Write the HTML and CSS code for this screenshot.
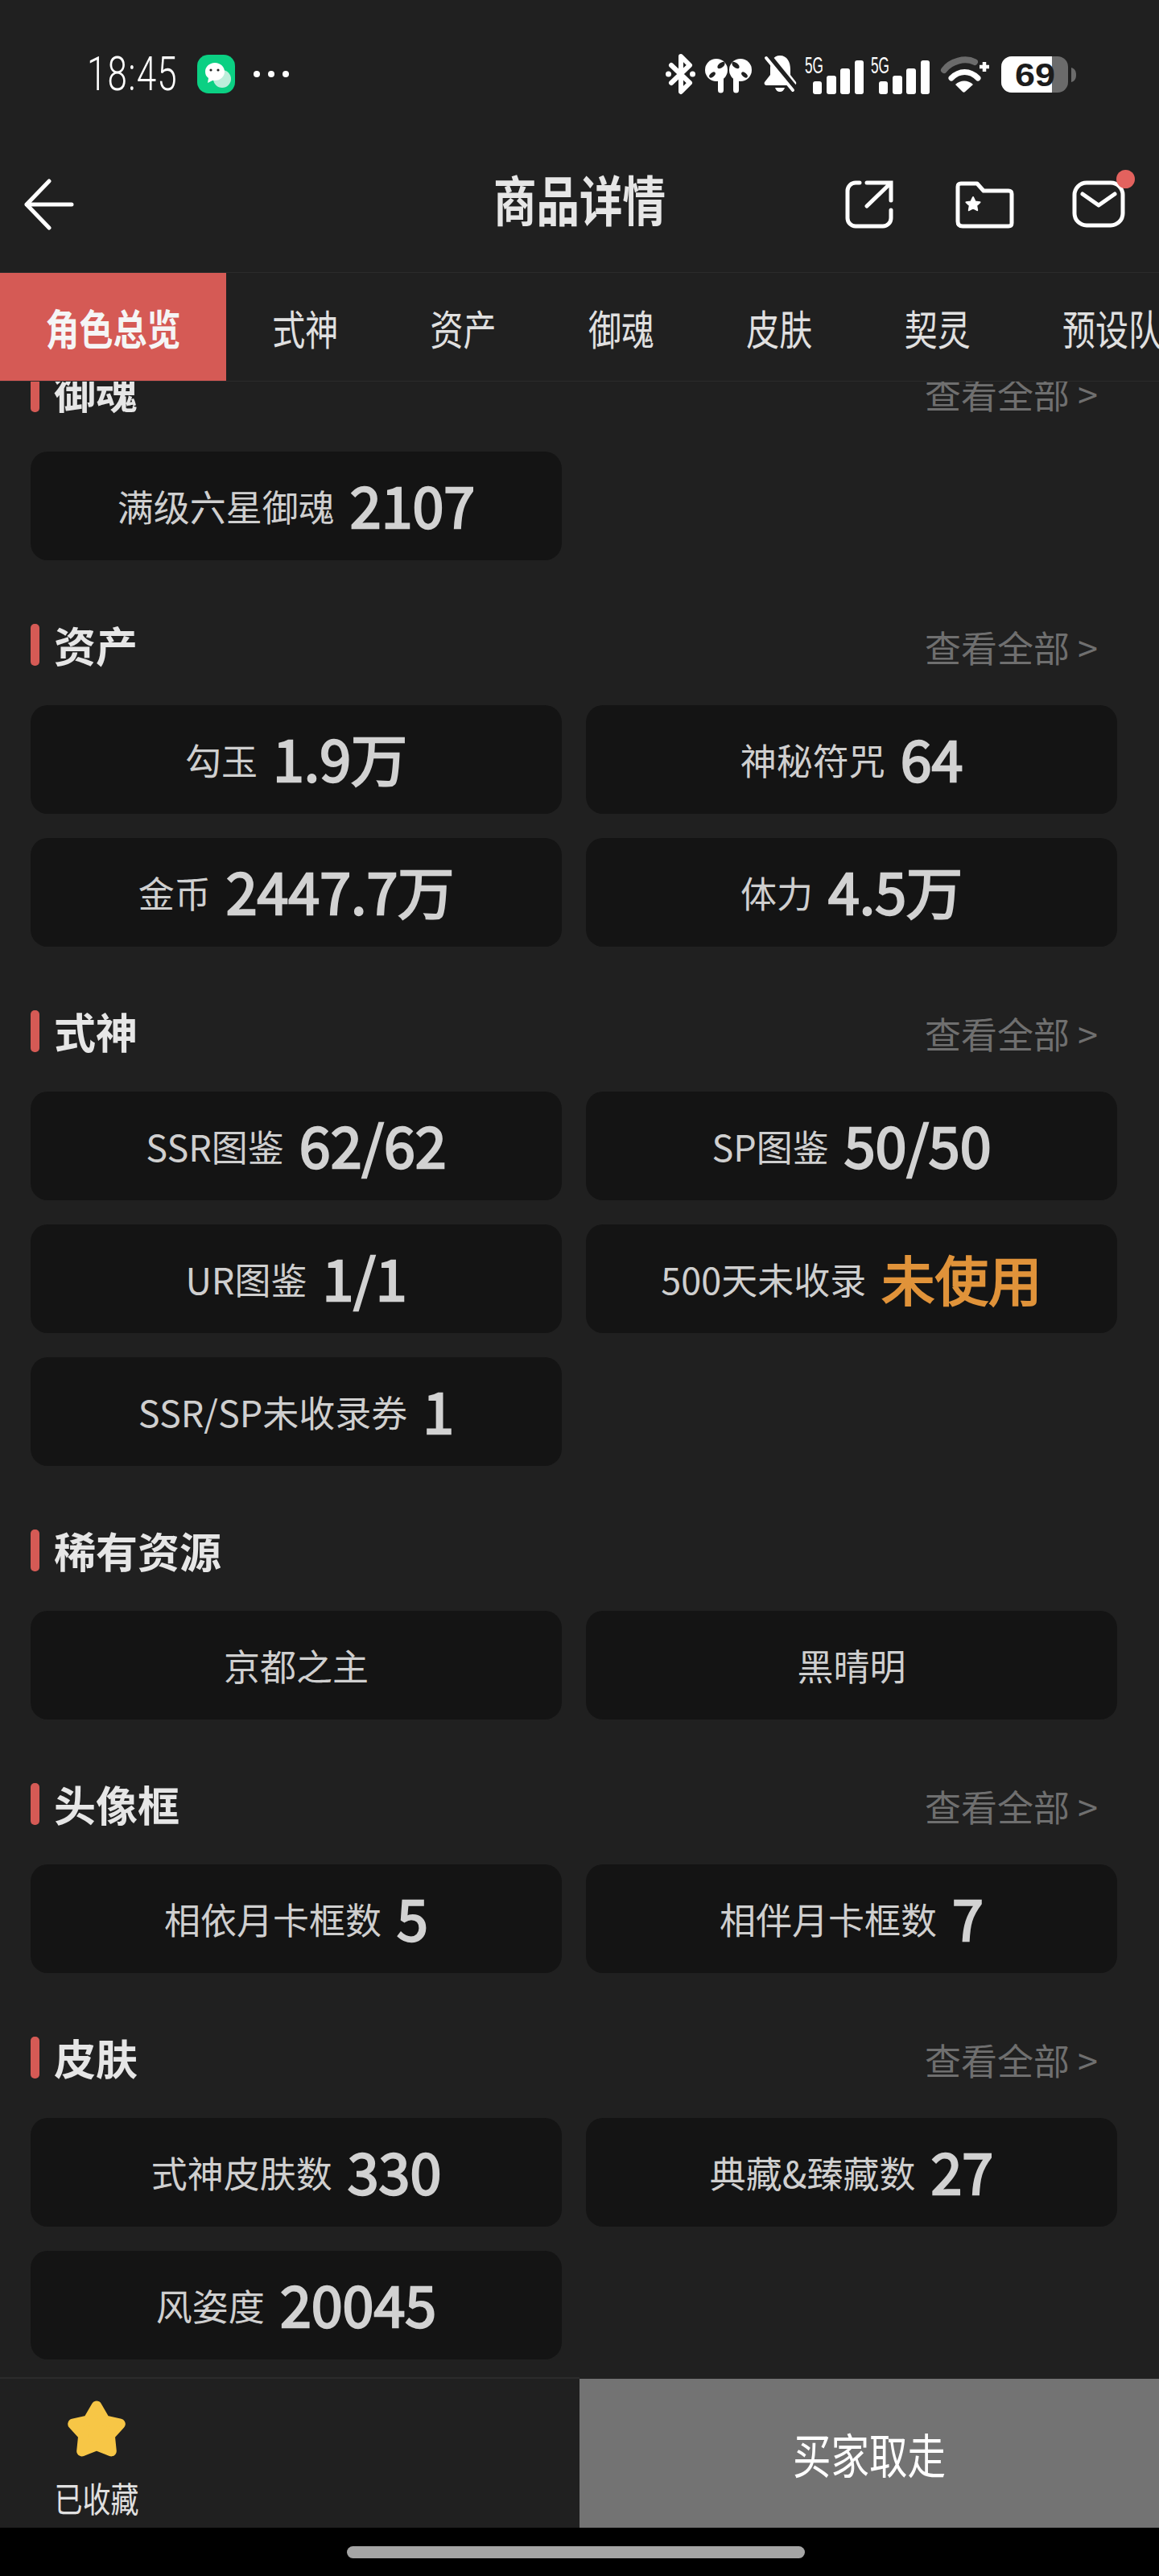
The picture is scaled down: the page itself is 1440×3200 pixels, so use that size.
FILE: index.html
```html
<!DOCTYPE html>
<html>
<head>
    <title>商品详情</title>
    <meta charset="UTF-8">
    <link rel="stylesheet" href="styles.css">
</head>
<body>
    <!-- 状态栏 -->
    <div class="status-bar">
        <span class="time">18:45</span>
        <svg class="wechat" viewBox="0 0 47 48" width="47" height="48">
            <rect width="47" height="48" rx="14" fill="#0bd083"/>
            <circle cx="31" cy="30" r="11" fill="#bdeedb"/>
            <path d="M22 10c7 0 12 5 12 11s-5 11-12 11l-3 0-6 3 1-6c-3-2-4-5-4-8 0-6 5-11 12-11z" fill="#fff"/>
            <circle cx="17" cy="19" r="1.6" fill="#222"/>
            <circle cx="26" cy="19" r="1.6" fill="#222"/>
        </svg>
        <span class="dots"><i></i><i></i><i></i></span>
        <div class="status-icons">
            <svg class="ic-bt" viewBox="0 0 37 52" width="37" height="52">
                <path d="M7 15l23 22-11 11V4l11 11L7 37" fill="none" stroke="#fff" stroke-width="6" stroke-linejoin="round" stroke-linecap="round"/>
                <circle cx="3.500" cy="26" r="3.500" fill="#fff"/>
                <circle cx="33.500" cy="26" r="3.500" fill="#fff"/>
            </svg>
            <svg class="ic-pods" viewBox="0 0 58 52" width="58" height="52">
                <circle cx="14" cy="21" r="14" fill="#fff"/>
                <circle cx="44" cy="21" r="14" fill="#fff"/>
                <path d="M19.500 30v16M38.500 30v16" stroke="#fff" stroke-width="7" stroke-linecap="round"/>
                <ellipse cx="20" cy="15" rx="5.500" ry="3" transform="rotate(-40 20 15)" fill="#202020"/>
                <ellipse cx="9" cy="27" rx="4.500" ry="2.500" transform="rotate(-40 9 27)" fill="#202020"/>
                <ellipse cx="38" cy="15" rx="5.500" ry="3" transform="rotate(40 38 15)" fill="#202020"/>
                <ellipse cx="49" cy="27" rx="4.500" ry="2.500" transform="rotate(40 49 27)" fill="#202020"/>
            </svg>
            <svg class="ic-bell" viewBox="0 0 42 52" width="42" height="52">
                <path d="M21 3c9 0 13 8 13 17v7l7 9c1 3-1 4-4 4H5c-3 0-4-2-3-4l7-9v-9C9 10 13 3 21 3z" fill="#fff"/>
                <path d="M15 43h12c-1 3-3 5-6 5s-5-2-6-5z" fill="#fff"/>
                <path d="M3 3l35 43" stroke="#202020" stroke-width="7" transform="translate(2 -2)"/>
                <path d="M4 6l33 40" stroke="#fff" stroke-width="4" stroke-linecap="round"/>
            </svg>
            <svg class="ic-signal" viewBox="0 0 73 52" width="73" height="52">
                <text class="net-type" x="0" y="25" textLength="23" lengthAdjust="spacingAndGlyphs">5G</text>
                <rect x="10" y="35" width="11" height="16" rx="3" fill="#fff"/>
                <rect x="27" y="28" width="12" height="23" rx="3" fill="#fff"/>
                <rect x="44" y="19" width="12" height="32" rx="3" fill="#fff"/>
                <rect x="62" y="9" width="11" height="42" rx="3" fill="#fff"/>
            </svg>
            <svg class="ic-signal ic-signal2" viewBox="0 0 73 52" width="73" height="52">
                <text class="net-type" x="0" y="25" textLength="23" lengthAdjust="spacingAndGlyphs">5G</text>
                <rect x="10" y="35" width="11" height="16" rx="3" fill="#fff"/>
                <rect x="27" y="28" width="12" height="23" rx="3" fill="#fff"/>
                <rect x="44" y="19" width="12" height="32" rx="3" fill="#fff"/>
                <rect x="62" y="9" width="11" height="42" rx="3" fill="#fff"/>
            </svg>
            <svg class="ic-wifi" viewBox="0 0 62 52" width="62" height="52">
                <path d="M4 21C12 10 30 5 42 11" fill="none" stroke="#6b6b6b" stroke-width="8" stroke-linecap="round"/>
                <path d="M13 31c10-10 23-10 33 0" fill="none" stroke="#fff" stroke-width="7" stroke-linecap="round"/>
                <path d="M18 39c6-6 16-6 22 0L30 48c-1 1-2 1-3 0z" fill="#fff"/>
                <path d="M54 11v12M48 17h12" stroke="#fff" stroke-width="4.500"/>
            </svg>
            <svg class="ic-battery" viewBox="0 0 93 52" width="93" height="52">
                <rect x="0" y="4" width="83" height="45" rx="13" fill="#6b6b6b"/>
                <path d="M13 4H63V49H13A13 13 0 0 1 0 36V17A13 13 0 0 1 13 4z" fill="#fff"/>
                <path d="M87 18c4 1 6 4 6 9s-2 8-6 9z" fill="#6b6b6b"/>
                <text class="battery-num" x="17" y="41" textLength="50" lengthAdjust="spacingAndGlyphs">69</text>
            </svg>
        </div>
    </div>

    <!-- 导航 -->
    <div class="nav-bar">
        <div class="nav-left">
            <svg viewBox="0 0 60 64" width="60" height="64">
                <path d="M31 3L3 32l28 29M3 32h56" fill="none" stroke="#fff" stroke-width="5" stroke-linecap="round" stroke-linejoin="round"/>
            </svg>
        </div>
        <h1 class="nav-title"><span>商品详情</span></h1>
        <div class="nav-right">
            <svg viewBox="0 0 60 60" width="60" height="60">
                <path d="M18 3h-5A10 10 0 0 0 3 13v34a10 10 0 0 0 10 10h34a10 10 0 0 0 10-10V37M27 3h30v22M27 32L56 4" fill="none" stroke="#fff" stroke-width="5" stroke-linecap="round"/>
            </svg>
            <svg class="ic-folder" viewBox="0 0 73 60" width="73" height="60">
                <path d="M3 8c0-3 1-4 4-4h20l8 9h31c3 0 4 1 4 4v36c0 3-1 4-4 4H9c-4 0-6-2-6-6z" fill="none" stroke="#fff" stroke-width="5" stroke-linejoin="round"/>
                <path d="M22 21l2.600 5.400 5.900.800-4.300 4.100 1 5.900-5.200-2.800-5.200 2.800 1-5.900-4.300-4.100 5.900-.800z" fill="#fff" stroke="#fff" stroke-width="2" stroke-linejoin="round"/>
            </svg>
            <div class="mail">
                <svg viewBox="0 0 66 60" width="66" height="60">
                    <rect x="3" y="3" width="60" height="53" rx="15" fill="none" stroke="#fff" stroke-width="5"/>
                    <path d="M13 17l20 14 20-14" fill="none" stroke="#fff" stroke-width="5" stroke-linecap="round" stroke-linejoin="round"/>
                </svg>
                <span class="mail-dot"></span>
            </div>
        </div>
    </div>

    <div class="tabs">
        <div class="tab active"><span>角色总览</span></div>
        <div class="tab"><span>式神</span></div>
        <div class="tab"><span>资产</span></div>
        <div class="tab"><span>御魂</span></div>
        <div class="tab"><span>皮肤</span></div>
        <div class="tab"><span>契灵</span></div>
        <div class="tab"><span>预设队伍</span></div>
    </div>

    <div class="scroll-area">
        <div class="scroll-inner">
            <div class="section">
                <div class="section-head"><h3>御魂</h3><span class="see-all">查看全部 &gt;</span></div>
                <div class="card-grid">
                    <div class="card"><span class="card-label">满级六星御魂</span><span class="card-value">2107</span></div>
                </div>
            </div>

            <div class="section">
                <div class="section-head"><h3>资产</h3><span class="see-all">查看全部 &gt;</span></div>
                <div class="card-grid">
                    <div class="card"><span class="card-label">勾玉</span><span class="card-value">1.9万</span></div>
                    <div class="card"><span class="card-label">神秘符咒</span><span class="card-value">64</span></div>
                    <div class="card"><span class="card-label">金币</span><span class="card-value">2447.7万</span></div>
                    <div class="card"><span class="card-label">体力</span><span class="card-value">4.5万</span></div>
                </div>
            </div>

            <div class="section">
                <div class="section-head"><h3>式神</h3><span class="see-all">查看全部 &gt;</span></div>
                <div class="card-grid">
                    <div class="card"><span class="card-label">SSR图鉴</span><span class="card-value">62/62</span></div>
                    <div class="card"><span class="card-label">SP图鉴</span><span class="card-value">50/50</span></div>
                    <div class="card"><span class="card-label">UR图鉴</span><span class="card-value">1/1</span></div>
                    <div class="card"><span class="card-label">500天未收录</span><span class="card-value orange">未使用</span></div>
                    <div class="card"><span class="card-label">SSR/SP未收录券</span><span class="card-value">1</span></div>
                </div>
            </div>

            <div class="section">
                <div class="section-head"><h3>稀有资源</h3></div>
                <div class="card-grid">
                    <div class="card"><span class="card-label">京都之主</span></div>
                    <div class="card"><span class="card-label">黑晴明</span></div>
                </div>
            </div>

            <div class="section">
                <div class="section-head"><h3>头像框</h3><span class="see-all">查看全部 &gt;</span></div>
                <div class="card-grid">
                    <div class="card"><span class="card-label">相依月卡框数</span><span class="card-value">5</span></div>
                    <div class="card"><span class="card-label">相伴月卡框数</span><span class="card-value">7</span></div>
                </div>
            </div>

            <div class="section">
                <div class="section-head"><h3>皮肤</h3><span class="see-all">查看全部 &gt;</span></div>
                <div class="card-grid">
                    <div class="card"><span class="card-label">式神皮肤数</span><span class="card-value">330</span></div>
                    <div class="card"><span class="card-label">典藏&amp;臻藏数</span><span class="card-value">27</span></div>
                    <div class="card"><span class="card-label">风姿度</span><span class="card-value">20045</span></div>
                </div>
            </div>
        </div>
    </div>

    <!-- 底部操作 -->
    <div class="bottom-bar">
        <div class="bottom-left">
            <div class="fav">
                <svg viewBox="0 0 74 74" width="74" height="74">
                    <path d="M37 9l10.300 17.800 19 4.300-13 14.300 2 19.500L37 57.600l-18.300 7.300 2-19.500-13-14.300 19-4.300z" fill="#f7c646" stroke="#f7c646" stroke-width="13" stroke-linejoin="round"/>
                </svg>
                <span class="fav-text">已收藏</span>
            </div>
        </div>
        <div class="buy-btn"><span>买家取走</span></div>
    </div>

    <div class="home-bar"><div class="home-pill"></div></div>
</body>
</html>
```

FILE: styles.css
```css
* { box-sizing: border-box; }
html, body { margin: 0; padding: 0; }
body { width: 1440px; height: 3200px; overflow: hidden; background: #202020; font-family: "Noto Sans CJK SC", "Noto Sans", sans-serif; color: #cfcfcf; }
svg { display: block; flex: none; overflow: visible; }

/* 状态栏 */
.status-bar { height: 184px; display: flex; align-items: center; padding-left: 108px; }
.time { font-family: Roboto, sans-serif; font-weight: 300; font-size: 44px; line-height: 50px; color: #fff; letter-spacing: 1.2px; transform: scaleY(1.35); }
.wechat { margin-left: 24px; }
.dots { display: flex; gap: 10px; margin-left: 23px; }
.dots i { width: 8px; height: 8px; border-radius: 50%; background: #fff; }
.status-icons { display: flex; align-items: center; margin-left: auto; padding-right: 103px; }
.ic-pods { margin-left: 12px; }
.ic-bell { margin-left: 14px; }
.ic-signal { margin-left: 10px; }
.ic-signal2 { margin-left: 9px; }
.ic-wifi { margin-left: 14px; }
.ic-battery { margin-left: 13px; }
.net-type { font-family: "Liberation Sans", sans-serif; font-size: 30px; fill: #fff; }
.battery-num { font-family: "Liberation Sans", sans-serif; font-weight: bold; font-size: 40px; fill: #1c1c1c; }

/* 导航 */
.nav-bar { height: 154px; display: grid; grid-template-columns: 1fr auto 1fr; align-items: center; padding-bottom: 14px; }
.nav-left { padding-left: 30px; }
.nav-title { margin: 0; font-size: 53.500px; font-weight: bold; color: #e6e6e6; line-height: 68px; }
.nav-title span { display: block; transform: translateY(-8px) scaleY(1.25); }
.nav-right { display: flex; align-items: center; justify-content: flex-end; padding-right: 42px; }
.ic-folder { margin: 0 72px 0 77px; }
.mail { position: relative; }
.mail-dot { position: absolute; top: -13px; right: -12px; width: 23px; height: 23px; border-radius: 50%; background: #e3625e; }

.tabs { height: 136px; display: flex; overflow: hidden; border-top: 1px solid #2b2b2b; border-bottom: 1px solid #2b2b2b; white-space: nowrap; }
.tab { flex: none; display: flex; align-items: center; padding: 0 57.200px; font-size: 41px; color: #e0e0e0; }
.tab span { display: block; transform: scaleY(1.25); }
.tab.active { width: 281px; height: 135px; margin-top: -1px; padding: 0; justify-content: center; background: #d55a55; color: #f5f5f5; font-size: 42px; font-weight: bold; }

.scroll-area { height: 2479px; overflow: hidden; }
.scroll-inner { margin-top: -14px; padding: 0 52px 0 38px; }
.section { margin-bottom: 79px; }
.section-head { height: 52px; margin-bottom: 49px; display: flex; align-items: center; justify-content: space-between; }
.section-head h3 { margin: 0; padding-left: 29px; position: relative; font-size: 52px; line-height: 52px; font-weight: bold; color: #e6e6e6; }
.section-head h3::before { content: ""; position: absolute; left: 0; top: 0; width: 11px; height: 52px; border-radius: 5px; background: #d55a55; }
.see-all { margin-right: 24px; font-size: 45px; line-height: 52px; color: #6f6f6f; position: relative; top: 3px; }

.card-grid { display: grid; grid-template-columns: 660px 660px; gap: 30px; }
.card { height: 135px; border-radius: 21px; background: #141414; display: flex; align-items: center; justify-content: center; gap: 19px; }
.card-label { font-size: 45px; line-height: 60px; color: #cfcfcf; }
/* 字库没有中粗，用描边凑 */
.card-value { font-size: 70px; line-height: 80px; font-weight: 400; -webkit-text-stroke: 2.4px #d2d2d2; color: #d2d2d2; position: relative; top: -3px; }
.card-value.orange { font-size: 66px; letter-spacing: 0.5px; top: -2px; color: #e0933a; -webkit-text-stroke: 2.4px #e0933a; }

/* 底部 */
.bottom-bar { height: 187px; display: flex; }
.bottom-left { width: 720px; border-top: 2px solid #2b2b2b; }
.fav { width: 240px; display: flex; flex-direction: column; align-items: center; padding-top: 25px; }
.fav-text { margin-top: 26px; font-size: 35px; line-height: 44px; color: #e0e0e0; transform: scaleY(1.25); }
.buy-btn { width: 720px; margin-top: 2px; background: #737373; display: flex; align-items: center; justify-content: center; color: #fff; font-size: 47.500px; }
.buy-btn span { display: block; transform: scaleY(1.25); }
.home-bar { height: 60px; background: #000; padding: 23px 0 0 431px; }
.home-pill { width: 569px; height: 15px; border-radius: 8px; background: #a5a5a5; }
```
